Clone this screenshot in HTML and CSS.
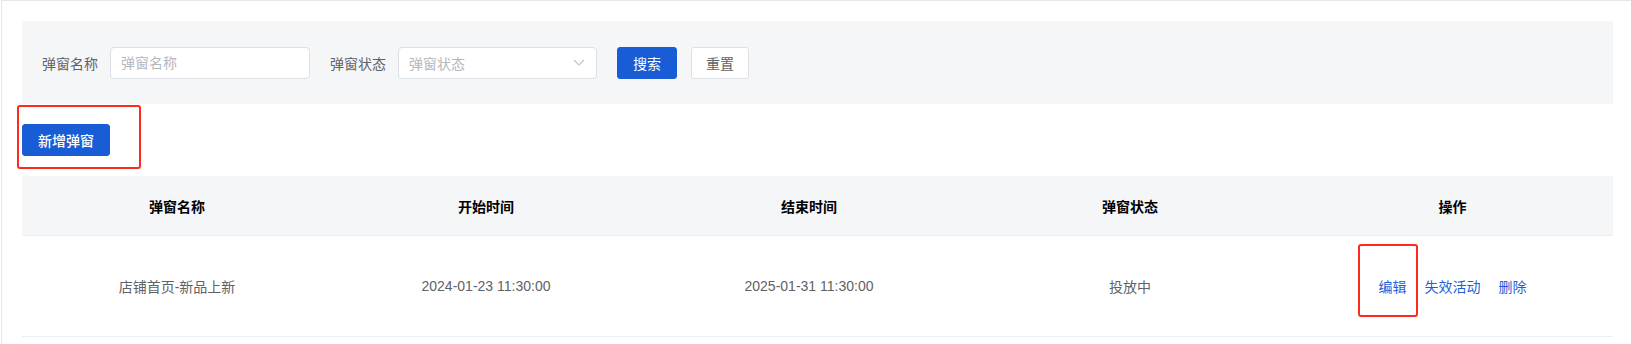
FILE: index.html
```html
<!DOCTYPE html>
<html lang="zh-CN">
<head>
    <meta charset="UTF-8">
    <title>弹窗管理</title>
    <link rel="stylesheet" href="styles.css">
</head>
<body>
    <div class="page">
        <div class="filter">
            <div class="form-item">
                <label class="form-label">弹窗名称</label>
                <input class="input" type="text" placeholder="弹窗名称">
            </div>
            <div class="form-item">
                <label class="form-label">弹窗状态</label>
                <div class="select">
                    <span class="select-text">弹窗状态</span>
                    <svg class="select-arrow" width="12" height="7" viewBox="0 0 12 7">
                        <path d="M1 1l5 5 5-5" fill="none" stroke="#c0c4cc" stroke-width="1.2"/>
                    </svg>
                </div>
            </div>
            <button class="btn btn-primary">搜索</button>
            <button class="btn btn-default">重置</button>
        </div>

        <div class="toolbar">
            <div class="mark-wrap">
                <button class="btn btn-primary btn-add">新增弹窗</button>
                <span class="mark mark-add"></span>
            </div>
        </div>

        <div class="table">
            <div class="row head">
                <div class="cell">弹窗名称</div>
                <div class="cell">开始时间</div>
                <div class="cell">结束时间</div>
                <div class="cell">弹窗状态</div>
                <div class="cell c5">操作</div>
            </div>
            <div class="row body">
                <div class="cell">店铺首页-新品上新</div>
                <div class="cell">2024-01-23 11:30:00</div>
                <div class="cell">2025-01-31 11:30:00</div>
                <div class="cell">投放中</div>
                <div class="cell c5 ops">
                    <span class="mark-wrap">
                        <a class="link">编辑</a>
                        <span class="mark mark-edit"></span>
                    </span>
                    <a class="link">失效活动</a>
                    <a class="link">删除</a>
                </div>
            </div>
        </div>
    </div>
</body>
</html>
```

FILE: styles.css
```css
html, body { margin: 0; background: #fff; overflow: hidden; }
body { font-family: "Liberation Sans", "Noto Sans CJK SC", sans-serif; font-size: 14px; color: #606266; }

.page { margin-left: 1px; border-top: 1px solid #e4e7ed; border-left: 1px solid #e4e7ed; padding: 20px 18px 20px 20px; }

.filter { background: #f5f6f8; height: 83px; padding: 0 20px; display: flex; align-items: center; }
.form-item { display: flex; align-items: center; margin-right: 20px; }
.form-label { color: #606266; margin-right: 12px; }
.input { width: 200px; height: 32px; box-sizing: border-box; border: 1px solid #dcdfe6; border-radius: 4px; padding: 0 10px; font: inherit; color: #606266; outline: none; }
.input::placeholder { color: #b4b7bd; }
.select { width: 199px; height: 32px; box-sizing: border-box; border: 1px solid #dcdfe6; border-radius: 4px; background: #fff; padding: 0 10px; display: flex; align-items: center; justify-content: space-between; }
.select-text { color: #b4b7bd; }
.select-arrow { margin-right: 1px; }

.btn { height: 32px; padding: 0; width: 60px; border-radius: 3px; font: inherit; cursor: pointer; }
.btn-primary { background: #185cd6; color: #fff; border: 1px solid #185cd6; }
.btn-default { background: #fff; color: #606266; border: 1px solid #dcdfe6; margin-left: 14px; width: 58px; }

.toolbar { padding: 20px 0; display: flex; }
.btn-add { width: 88px; font-weight: 500; }

.mark-wrap { position: relative; display: inline-block; }
.mark { position: absolute; border: 2px solid #ff2a1f; border-radius: 3px; pointer-events: none; }
.mark-add { left: -5px; top: -19px; width: 120px; height: 60px; }
.mark-edit { left: -21px; top: -32px; width: 56px; height: 69px; }

.table { font-size: 14px; }
.row { display: grid; grid-template-columns: 310px 308px 338px 304px 1fr; align-items: center; border-bottom: 1px solid #ebeef5; }
.head { background: #f5f6f8; height: 59px; color: #000; font-weight: bold; }
.body { height: 100px; color: #606266; }
.cell { text-align: center; }
.c5 { padding-left: 10px; }
.ops { display: flex; justify-content: center; gap: 18px; }
.link { color: #1f5fd6; cursor: pointer; }
```
